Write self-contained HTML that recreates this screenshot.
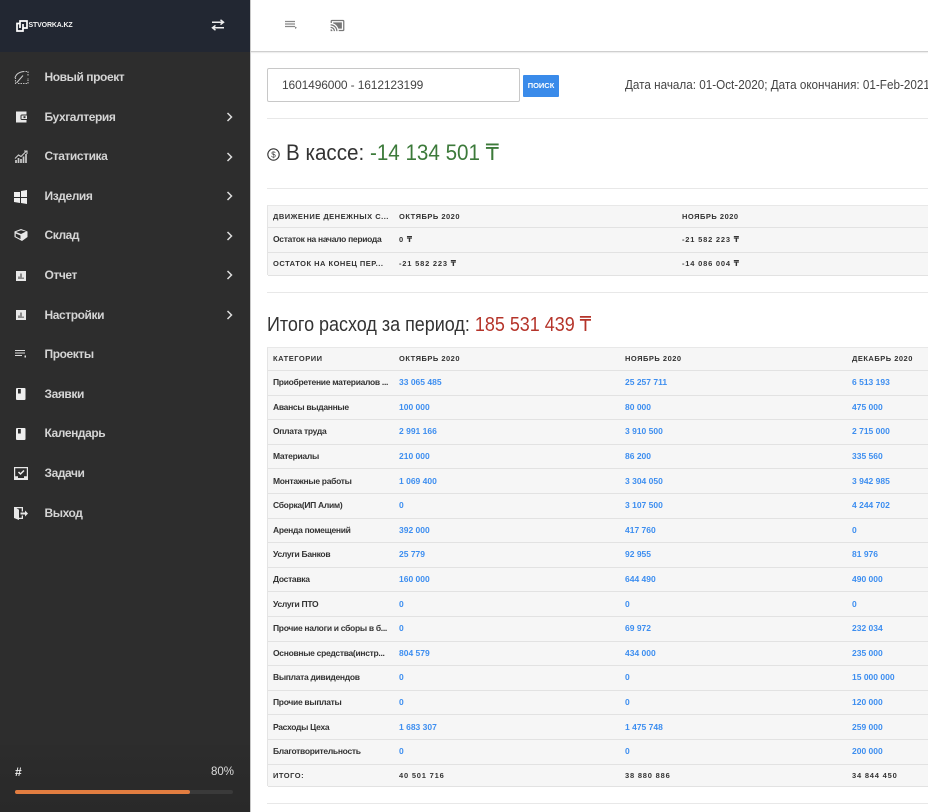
<!DOCTYPE html>
<html lang="ru"><head><meta charset="utf-8"><title>Stvorka</title>
<style>
html,body{margin:0;padding:0;background:#fff}
body{width:928px;height:812px;position:relative;overflow:hidden;font-family:"Liberation Sans","DejaVu Sans",sans-serif;color:#333}
.a{position:absolute;white-space:nowrap}
.sx{transform-origin:0 50%}
#side{position:absolute;left:0;top:0;width:250px;height:812px;background:#2d2d2d;border-right:1px solid #c8c8c8}
#shead{position:absolute;left:0;top:0;width:250px;height:52px;background:#222732}
#sfoot{position:absolute;left:0;top:745px;width:250px;height:67px;background:linear-gradient(#2c2c2c,#292929)}
.m{position:absolute;left:44.5px;color:#d4d4d4;font-size:12px;font-weight:bold;line-height:16px;letter-spacing:-.42px}
.i{position:absolute;left:13px;width:16px;height:16px}
.ch{position:absolute;left:226px;width:7px;height:10px}
.hr{position:absolute;left:267px;right:0;height:1px;background:#e8e8e8}
.t{position:absolute;left:267px;width:661px;background:#f6f6f6;border-left:1px solid #e4e4e4;border-top:1px solid #e8e8e8;box-sizing:border-box}
.r{position:absolute;left:0;right:0;border-bottom:1px solid #e2e2e2;box-sizing:border-box}
.r span{position:absolute;white-space:nowrap;font-size:8.5px;font-weight:bold;color:#333;top:50%;line-height:12px;margin-top:-6.6px}
.r span.c0{letter-spacing:-.3px}
.h span{font-size:7.5px;letter-spacing:.5px;color:#333;margin-top:-6px}
.h span.c0{letter-spacing:.5px}
.r span.n{font-size:7.5px;letter-spacing:.8px;margin-top:-6px}
.r span.b{color:#3d8ef0}
.c0{left:5px}
.c1{left:131px}
.c2{left:357px}
.c3{left:584px}
.d2{left:414px}
</style></head><body>

<div id="side">
<div id="shead"></div><div id="sfoot"></div>
<svg class="a" style="left:15.500px;top:19.500px" width="12" height="12" viewBox="0 0 12 12"><path d="M4 3.500H1v7.500h6V8" fill="none" stroke="#fff" stroke-width="1.700"/><path d="M4 8V1h7v7H7V4" fill="none" stroke="#fff" stroke-width="1.700"/></svg>
<div class="a" style="left:28.500px;top:20px;font-size:7px;font-weight:bold;color:#f0f0f0;line-height:11px;letter-spacing:-.15px">STVORKA.KZ</div>
<svg class="a" style="left:211px;top:19px" width="14" height="12" viewBox="0 0 14 12"><path d="M1 3.200h11.500M9.500 .8 12.500 3.200 9.500 5.600M13 8.800H1.500M4.500 6.400 1.500 8.800 4.500 11.200" fill="none" stroke="#eee" stroke-width="1.500"/></svg>

<svg class="i" style="top:69px" viewBox="0 0 16 16"><path d="M2.500 15V9M5 14.500h10V9M15 6.500V2.500H11" fill="none" stroke="#bbb" stroke-width="1.100" stroke-dasharray="1.500 1"/><path d="M2 9C3 5 6 3 11 2.500M3.500 14 10 6.500" fill="none" stroke="#ccc" stroke-width="1"/></svg>
<div class="m" style="top:69px">Новый проект</div>

<svg class="i" style="top:109px" viewBox="0 0 16 16"><path d="M3 2.500h10.500v3H9A1.500 1.500 0 0 0 7.500 7v2.500A1.500 1.500 0 0 0 9 11h4.500v2.500H3z" fill="#e8e8e8"/><path d="M8.500 6.500h5.500v3.500H8.500zM10.500 7.300h2v1.800h-2z" fill="#e8e8e8" fill-rule="evenodd"/></svg>
<div class="m" style="top:109px">Бухгалтерия</div>
<svg class="ch" style="top:112px" viewBox="0 0 7 10"><path d="M1.500 1l4 4-4 4" fill="none" stroke="#ddd" stroke-width="1.500"/></svg>

<svg class="i" style="top:148px" viewBox="0 0 16 16"><path d="M3 15v-3M5.500 15v-5M8 15v-4M10.500 15V8.500M13 15V6" stroke="#ccc" stroke-width="1.700"/><path d="M2 10.500 5.500 7 8 8.500 13.500 3M11 3h3v3" fill="none" stroke="#ccc" stroke-width="1.100"/></svg>
<div class="m" style="top:148px">Статистика</div>
<svg class="ch" style="top:152px" viewBox="0 0 7 10"><path d="M1.500 1l4 4-4 4" fill="none" stroke="#ddd" stroke-width="1.500"/></svg>

<svg class="i" style="top:189px" viewBox="0 0 16 16"><path d="M1 3h6v5H1zM8 2l6-1v7H8zM1 9h6v5l-6-1zM8 9h6v6l-6-1z" fill="#eee"/></svg>
<div class="m" style="top:188px">Изделия</div>
<svg class="ch" style="top:191px" viewBox="0 0 7 10"><path d="M1.500 1l4 4-4 4" fill="none" stroke="#ddd" stroke-width="1.500"/></svg>

<svg class="i" style="top:227px" viewBox="0 0 16 16"><path d="M8 2l6.500 2.500v5.500l-5.500 4-7.500-4V4.500z" fill="#e8e8e8"/><path d="M3 5l5 2 5-2.500L8 3.200zM2.700 6.500 7.500 8.500v3.500l-4.800-2.500z" fill="#2d2d2d"/></svg>
<div class="m" style="top:227px">Склад</div>
<svg class="ch" style="top:231px" viewBox="0 0 7 10"><path d="M1.500 1l4 4-4 4" fill="none" stroke="#ddd" stroke-width="1.500"/></svg>

<svg class="a" style="left:16px;top:271px" width="10" height="10" viewBox="0 0 10 10"><rect width="10" height="10" fill="#e8e8e8"/><path d="M3 8V5.500M5 8V2.500M7 8V6.500" stroke="#2d2d2d" stroke-width="1"/></svg>
<div class="m" style="top:267px">Отчет</div>
<svg class="ch" style="top:270px" viewBox="0 0 7 10"><path d="M1.500 1l4 4-4 4" fill="none" stroke="#ddd" stroke-width="1.500"/></svg>

<svg class="a" style="left:16px;top:310px" width="10" height="10" viewBox="0 0 10 10"><rect width="10" height="10" fill="#e8e8e8"/><path d="M3 8V5.500M5 8V2.500M7 8V6.500" stroke="#2d2d2d" stroke-width="1"/></svg>
<div class="m" style="top:307px">Настройки</div>
<svg class="ch" style="top:310px" viewBox="0 0 7 10"><path d="M1.500 1l4 4-4 4" fill="none" stroke="#ddd" stroke-width="1.500"/></svg>

<svg class="a" style="left:15px;top:349px" width="12" height="10" viewBox="0 0 12 10"><path d="M0 1.500h10M0 4h10M0 6.500h7" stroke="#ddd" stroke-width="1"/><rect x="9.500" y="6.500" width="1.500" height="2" fill="#ddd"/></svg>
<div class="m" style="top:346px">Проекты</div>

<svg class="a" style="left:16px;top:388px" width="10" height="12" viewBox="0 0 10 12"><rect width="9.500" height="12" rx="1" fill="#eee"/><rect x="2" y="1" width="2.800" height="4.500" fill="#2d2d2d"/></svg>
<div class="m" style="top:386px">Заявки</div>

<svg class="a" style="left:16px;top:428px" width="10" height="12" viewBox="0 0 10 12"><rect width="9.500" height="12" rx="1" fill="#eee"/><rect x="2" y="1" width="2.800" height="4.500" fill="#2d2d2d"/></svg>
<div class="m" style="top:425px">Календарь</div>

<svg class="a" style="left:14px;top:467px" width="14" height="13" viewBox="0 0 14 13"><rect width="14" height="13" fill="#e8e8e8"/><path d="M1.200 1.200h11.600v8H10v1.800H4V9.200H1.200z" fill="#2d2d2d"/><path d="M4.500 5 6.500 7l3.500-3.500" fill="none" stroke="#eee" stroke-width="1.500"/></svg>
<div class="m" style="top:465px">Задачи</div>

<svg class="a" style="left:14px;top:507px" width="14" height="13" viewBox="0 0 14 13"><path d="M0 0h9v4.500H7.700V1.300H2.500l2.500 1.500v8h2.700V8.500H9V12H5v1L0 11z" fill="#e8e8e8"/><path d="M6.500 5.500h4.500V3.500L14 6.500 11 9.500V7.500H6.500z" fill="#e8e8e8"/></svg>
<div class="m" style="top:505px">Выход</div>

<div class="a" style="left:15px;top:765px;font-size:12px;font-weight:bold;color:#eee;line-height:14px">#</div>
<div class="a" style="left:211px;top:765px;font-size:11.500px;color:#ddd;line-height:14px">80%</div>
<div class="a" style="left:15px;top:790px;width:218px;height:4px;background:#3a3a3a;border-radius:2px"><div style="width:175px;height:4px;background:#e27d40;border-radius:2px"></div></div>
</div>

<div class="a" style="left:251px;top:51px;width:677px;height:1px;background:#cfcfcf;box-shadow:0 1px 1px #e6e6e6"></div>
<svg class="a" style="left:284px;top:19px" width="14" height="12" viewBox="0 0 14 12"><path d="M1 2.500h10M1 5h10M1 7.500h10" stroke="#888" stroke-width="1.300"/><path d="M11 7.500v2.500l2-1.200z" fill="#888"/></svg>
<svg class="a" style="left:330px;top:18px" width="15" height="15" viewBox="0 0 24 24"><path fill="#777" d="M1 18v3h3c0-1.660-1.340-3-3-3zm0-4v2c2.760 0 5 2.240 5 5h2c0-3.870-3.130-7-7-7zm18-7H5v1.630c3.960 1.280 7.090 4.410 8.370 8.370H19V7zM1 10v2c4.970 0 9 4.030 9 9h2c0-6.080-4.930-11-11-11zm20-7H3c-1.100 0-2 .9-2 2v3h2V5h18v14h-7v2h7c1.100 0 2-.9 2-2V5c0-1.100-.9-2-2-2z"/></svg>

<div class="a" style="left:267px;top:68px;width:253px;height:34px;box-sizing:border-box;border:1px solid #c8c8c8;border-radius:2px;background:#fff;font-size:12px;line-height:32px;padding-left:14px;color:#444;letter-spacing:-.13px">1601496000 - 1612123199</div>
<div class="a" style="left:523px;top:75px;width:36px;height:22px;background:#3a8bea;border-radius:1px;color:#fff;font-size:7.500px;font-weight:bold;line-height:22px;text-align:center">ПОИСК</div>
<div class="a sx" style="left:625px;top:78px;font-size:12.500px;line-height:15px;color:#444;transform:scaleX(.935)">Дата начала: 01-Oct-2020; Дата окончания: 01-Feb-2021</div>
<div class="hr" style="top:118px"></div>

<svg class="a" style="left:267px;top:148px" width="13" height="13" viewBox="0 0 13 13"><circle cx="6.500" cy="6.500" r="5.700" fill="none" stroke="#333" stroke-width="1.100"/><text x="6.500" y="9.500" font-size="8" font-family="Liberation Sans" text-anchor="middle" fill="#333">$</text></svg>
<div class="a sx" style="left:286px;top:140px;font-size:22px;line-height:26px;color:#333;transform:scaleX(.937)">В кассе: <span style="color:#3c7a3a">-14 134 501 ₸</span></div>
<div class="hr" style="top:188px"></div>

<div class="t" style="top:205px;height:70px">
<div class="r h" style="top:0;height:22px"><span class="c0">ДВИЖЕНИЕ ДЕНЕЖНЫХ С...</span><span class="c1">ОКТЯБРЬ 2020</span><span class="d2">НОЯБРЬ 2020</span></div>
<div class="r" style="top:22px;height:25px"><span class="c0">Остаток на начало периода</span><span class="c1 n">0 ₸</span><span class="d2 n">-21 582 223 ₸</span></div>
<div class="r h" style="top:47px;height:23px"><span class="c0">ОСТАТОК НА КОНЕЦ ПЕР...</span><span class="c1 n">-21 582 223 ₸</span><span class="d2 n">-14 086 004 ₸</span></div>
</div>
<div class="hr" style="top:292px"></div>

<div class="a sx" style="left:267px;top:313px;font-size:20px;line-height:25px;color:#333;transform:scaleX(.898)">Итого расход за период: <span style="color:#b5342a">185 531 439 ₸</span></div>

<div class="t" style="top:347px;height:439px">
<div class="r h" style="top:0;height:23px"><span class="c0">КАТЕГОРИИ</span><span class="c1">ОКТЯБРЬ 2020</span><span class="c2">НОЯБРЬ 2020</span><span class="c3">ДЕКАБРЬ 2020</span></div>
<div class="r" style="top:23px;height:24.600px"><span class="c0">Приобретение материалов ...</span><span class="c1 b">33 065 485</span><span class="c2 b">25 257 711</span><span class="c3 b">6 513 193</span></div>
<div class="r" style="top:47.600px;height:24.600px"><span class="c0">Авансы выданные</span><span class="c1 b">100 000</span><span class="c2 b">80 000</span><span class="c3 b">475 000</span></div>
<div class="r" style="top:72.200px;height:24.600px"><span class="c0">Оплата труда</span><span class="c1 b">2 991 166</span><span class="c2 b">3 910 500</span><span class="c3 b">2 715 000</span></div>
<div class="r" style="top:96.800px;height:24.600px"><span class="c0">Материалы</span><span class="c1 b">210 000</span><span class="c2 b">86 200</span><span class="c3 b">335 560</span></div>
<div class="r" style="top:121.400px;height:24.600px"><span class="c0">Монтажные работы</span><span class="c1 b">1 069 400</span><span class="c2 b">3 304 050</span><span class="c3 b">3 942 985</span></div>
<div class="r" style="top:146px;height:24.600px"><span class="c0">Сборка(ИП Алим)</span><span class="c1 b">0</span><span class="c2 b">3 107 500</span><span class="c3 b">4 244 702</span></div>
<div class="r" style="top:170.600px;height:24.600px"><span class="c0">Аренда помещений</span><span class="c1 b">392 000</span><span class="c2 b">417 760</span><span class="c3 b">0</span></div>
<div class="r" style="top:195.200px;height:24.600px"><span class="c0">Услуги Банков</span><span class="c1 b">25 779</span><span class="c2 b">92 955</span><span class="c3 b">81 976</span></div>
<div class="r" style="top:219.800px;height:24.600px"><span class="c0">Доставка</span><span class="c1 b">160 000</span><span class="c2 b">644 490</span><span class="c3 b">490 000</span></div>
<div class="r" style="top:244.400px;height:24.600px"><span class="c0">Услуги ПТО</span><span class="c1 b">0</span><span class="c2 b">0</span><span class="c3 b">0</span></div>
<div class="r" style="top:269px;height:24.600px"><span class="c0">Прочие налоги и сборы в б...</span><span class="c1 b">0</span><span class="c2 b">69 972</span><span class="c3 b">232 034</span></div>
<div class="r" style="top:293.600px;height:24.600px"><span class="c0">Основные средства(инстр...</span><span class="c1 b">804 579</span><span class="c2 b">434 000</span><span class="c3 b">235 000</span></div>
<div class="r" style="top:318.200px;height:24.600px"><span class="c0">Выплата дивидендов</span><span class="c1 b">0</span><span class="c2 b">0</span><span class="c3 b">15 000 000</span></div>
<div class="r" style="top:342.800px;height:24.600px"><span class="c0">Прочие выплаты</span><span class="c1 b">0</span><span class="c2 b">0</span><span class="c3 b">120 000</span></div>
<div class="r" style="top:367.400px;height:24.600px"><span class="c0">Расходы Цеха</span><span class="c1 b">1 683 307</span><span class="c2 b">1 475 748</span><span class="c3 b">259 000</span></div>
<div class="r" style="top:392px;height:24.600px"><span class="c0">Благотворительность</span><span class="c1 b">0</span><span class="c2 b">0</span><span class="c3 b">200 000</span></div>
<div class="r h" style="top:416.600px;height:22.400px"><span class="c0" style="margin-top:-5px">ИТОГО:</span><span class="c1 n" style="margin-top:-5px">40 501 716</span><span class="c2 n" style="margin-top:-5px">38 880 886</span><span class="c3 n" style="margin-top:-5px">34 844 450</span></div>
</div>
<div class="hr" style="top:803px"></div>
</body></html>
